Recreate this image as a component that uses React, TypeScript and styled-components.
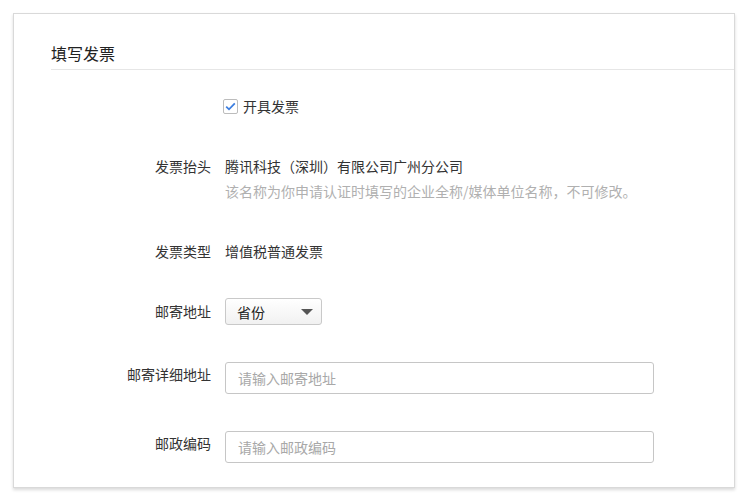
import React, { useState } from 'react';
import styled, { createGlobalStyle } from 'styled-components';

const GlobalStyle = createGlobalStyle`
  html, body {
    margin: 0;
    padding: 0;
    background: #ffffff;
    font-family: "Noto Sans CJK SC", "Noto Sans", sans-serif;
    color: #333;
  }
  * {
    box-sizing: border-box;
  }
`;

const Page = styled.div`
  padding: 13px 15px 0 13px;
  width: 750px;
  height: 500px;
`;

const Card = styled.div`
  width: 722px;
  height: 475px;
  background: #fff;
  border: 1px solid #d9d9d9;
  box-shadow: 0 2px 3px rgba(0, 0, 0, 0.15);
  padding-left: 37px;
`;

const Header = styled.div`
  padding-top: 27px;
  padding-bottom: 4px;
  border-bottom: 1px solid #e6e6e6;
`;

const Title = styled.h2`
  margin: 0;
  font-size: 16px;
  font-weight: normal;
  line-height: 24px;
  color: #222;
`;

const Form = styled.div`
  display: flex;
  flex-direction: column;
  gap: 36px;
  padding-top: 24px;
`;

const Row = styled.div<{ $gapTop?: number }>`
  display: flex;
  align-items: flex-start;
  gap: 14px;
  margin-top: ${p => p.$gapTop ?? 0}px;
`;

const Label = styled.div<{ $lh?: number }>`
  width: 160px;
  flex-shrink: 0;
  text-align: right;
  font-size: 14px;
  line-height: ${p => p.$lh ?? 24}px;
  color: #333;
`;

const Field = styled.div`
  display: flex;
  flex-direction: column;
`;

const Value = styled.div`
  font-size: 14px;
  line-height: 24px;
  color: #333;
`;

const Hint = styled.div`
  font-size: 14px;
  line-height: 24px;
  color: #b0b0b0;
  margin-top: 1px;
`;

const CheckLabel = styled.label`
  display: flex;
  align-items: center;
  gap: 5px;
  margin-left: -2px;
  font-size: 14px;
  line-height: 24px;
  color: #333;
  cursor: pointer;
`;

const CheckBox = styled.span<{ $checked: boolean }>`
  width: 15px;
  height: 15px;
  border: 1px solid #bcbcbc;
  border-radius: 2px;
  background: #fff;
  display: flex;
  align-items: center;
  justify-content: center;
  svg {
    visibility: ${p => (p.$checked ? 'visible' : 'hidden')};
  }
`;

const SelectBox = styled.div`
  width: 97px;
  height: 27px;
  border: 1px solid #c9c9c9;
  border-radius: 3px;
  background: linear-gradient(#ffffff, #f1f1f1);
  display: flex;
  align-items: center;
  justify-content: space-between;
  padding: 0 8px 0 11px;
  font-size: 14px;
  color: #222;
  cursor: pointer;
`;

const Arrow = styled.span`
  width: 0;
  height: 0;
  border-left: 6px solid transparent;
  border-right: 6px solid transparent;
  border-top: 6px solid #555;
`;

const Input = styled.input`
  width: 429px;
  height: 32px;
  border: 1px solid #c6c6c6;
  border-radius: 3px;
  padding: 0 12px;
  font-family: inherit;
  font-size: 14px;
  color: #333;
  outline: none;
  &::placeholder {
    color: #a8a8a8;
  }
`;

const App: React.FC = () => {
  const [checked, setChecked] = useState(true);

  return (
    <Page>
      <GlobalStyle />
      <Card>
        <Header>
          <Title>填写发票</Title>
        </Header>
        <Form>
          <Row>
            <Label />
            <CheckLabel onClick={() => setChecked(!checked)}>
              <CheckBox $checked={checked}>
                <svg width="11" height="9" viewBox="0 0 11 9">
                  <path d="M1.2 4.6 L4 7.3 L9.8 1.3" fill="none" stroke="#3c7ee0" strokeWidth="1.8" />
                </svg>
              </CheckBox>
              开具发票
            </CheckLabel>
          </Row>
          <Row>
            <Label>发票抬头</Label>
            <Field>
              <Value>腾讯科技（深圳）有限公司广州分公司</Value>
              <Hint>该名称为你申请认证时填写的企业全称/媒体单位名称，不可修改。</Hint>
            </Field>
          </Row>
          <Row>
            <Label>发票类型</Label>
            <Value>增值税普通发票</Value>
          </Row>
          <Row $gapTop={-1}>
            <Label $lh={27}>邮寄地址</Label>
            <SelectBox>
              省份
              <Arrow />
            </SelectBox>
          </Row>
          <Row $gapTop={1}>
            <Label>邮寄详细地址</Label>
            <Input placeholder="请输入邮寄地址" />
          </Row>
          <Row $gapTop={1}>
            <Label>邮政编码</Label>
            <Input placeholder="请输入邮政编码" />
          </Row>
        </Form>
      </Card>
    </Page>
  );
};

export default App;
